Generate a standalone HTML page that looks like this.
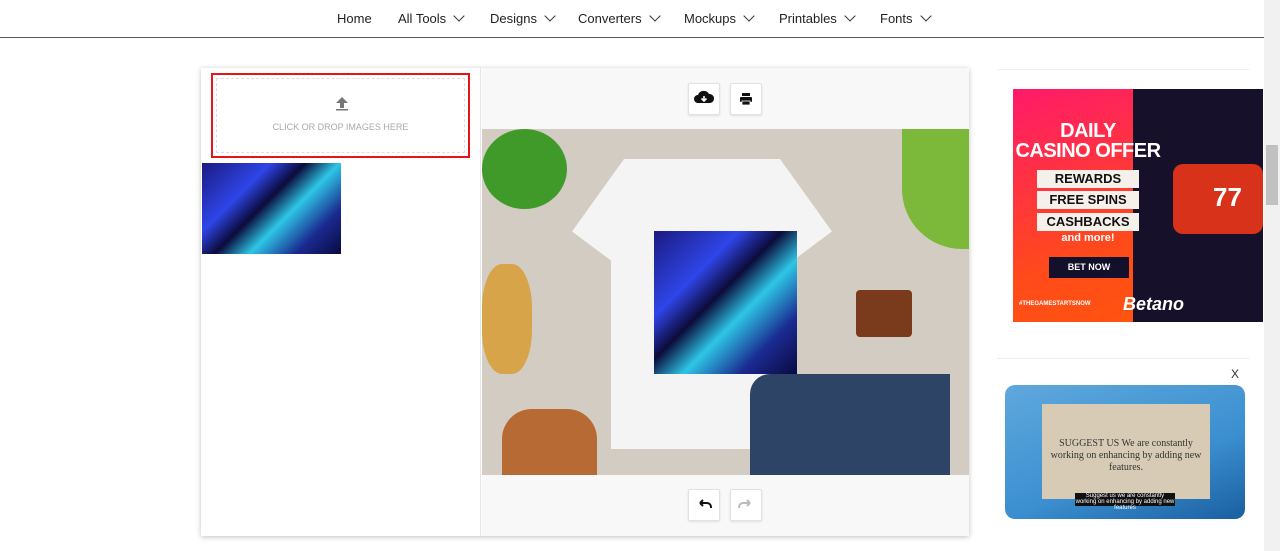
<!DOCTYPE html>
<html><head><style>
*{box-sizing:border-box;margin:0;padding:0}
body{width:1280px;height:551px;overflow:hidden;background:#fff;font-family:"Liberation Sans",sans-serif;position:relative}
.nav{position:absolute;top:0;left:0;width:1264px;height:38px;border-bottom:1px solid #555}
.nav span{position:absolute;top:11px;font-size:13px;color:#222}
.nav i{display:inline-block;width:8px;height:8px;border-right:1px solid #333;border-bottom:1px solid #333;transform:rotate(45deg);margin-left:9px;position:relative;top:-3px}
.card{position:absolute;left:201px;top:68px;width:768px;height:468px;background:#fff;box-shadow:0 1px 5px rgba(0,0,0,.25)}
.left{position:absolute;left:0;top:0;width:280px;height:468px;border-right:1px solid #e5e5e5}
.drop{position:absolute;left:10px;top:5px;width:259px;height:85px;border:2px solid #e8121b}
.drop .in{position:absolute;inset:3px;border:1px dashed #ddd}
.drop p{position:absolute;top:47px;width:100%;text-align:center;font-size:9px;color:#aaa}
.thumb{position:absolute;left:1px;top:95px;width:139px;height:91px;background:linear-gradient(135deg,#1a1a80,#2f45e8 30%,#0b0b3a 45%,#2dc6e6 60%,#1a2a90 80%,#0a0a40)}
.right{position:absolute;left:281px;top:0;width:487px;height:468px;background:#f8f8f8}
.btn{position:absolute;width:32px;height:32px;background:#fff;border:1px solid #e2e2e2;border-radius:2px;box-shadow:0 1px 2px rgba(0,0,0,.1)}
.photo{position:absolute;left:0;top:61px;width:487px;height:346px;background:#d3ccc2}
.ad{position:absolute;left:1013px;top:89px;width:250px;height:233px;background:linear-gradient(160deg,#ff1a6a,#ff4a1a 60%,#ff5a0a);overflow:hidden}
.ad .dark{position:absolute;right:0;top:0;width:130px;height:233px;background:#16102a}
.sb{position:absolute;right:0;top:0;width:16px;height:551px;background:#f1f1f1}
.tag{position:absolute;left:24px;width:102px;height:18px;background:#f5f0ea;font:bold 13px 'Liberation Sans Narrow','Liberation Sans';text-align:center;color:#111;line-height:18px}
</style></head><body>
<div class="nav">
<span style="left:337px">Home</span>
<span style="left:398px">All Tools<i></i></span>
<span style="left:490px">Designs<i></i></span>
<span style="left:578px">Converters<i></i></span>
<span style="left:684px">Mockups<i></i></span>
<span style="left:779px">Printables<i></i></span>
<span style="left:880px">Fonts<i></i></span>
</div>
<div class="card">
<div class="left">
<div class="drop"><div class="in"></div>
<svg style="position:absolute;left:122px;top:21px" width="14" height="16" viewBox="0 0 14 16"><path d="M7 1L1 7h4v5h4V7h4z" fill="#777"/><rect x="1" y="13" width="12" height="1.5" fill="#777"/></svg>
<p>CLICK OR DROP IMAGES HERE</p></div>
<div class="thumb"></div>
</div>
<div class="right">
<div class="btn" style="left:206px;top:15px"><svg width="30" height="30" viewBox="0 0 30 30"><path d="M9 19a4 4 0 0 1 0-8 6 6 0 0 1 11-1 4.5 4.5 0 0 1 1 9z" fill="#111"/><path d="M15 12v5M12.5 14.5l2.5 2.5 2.5-2.5" stroke="#fff" stroke-width="1.6" fill="none"/></svg></div>
<div class="btn" style="left:248px;top:15px"><svg width="30" height="30" viewBox="0 0 30 30"><rect x="11" y="9" width="8" height="3" fill="#111"/><rect x="9" y="13" width="12" height="5" rx="1" fill="#111"/><rect x="11" y="17" width="8" height="4" fill="#111" stroke="#fff" stroke-width=".8"/></svg></div>
<div class="photo">
<div style="position:absolute;left:0;top:0;width:85px;height:80px;border-radius:50%;background:#3f9a2a"></div>
<div style="position:absolute;left:90px;top:30px;width:260px;height:290px;background:#f4f4f4;clip-path:polygon(20% 0,80% 0,100% 25%,85% 35%,85% 100%,15% 100%,15% 35%,0 25%)"></div>
<div style="position:absolute;left:172px;top:102px;width:143px;height:143px;background:linear-gradient(135deg,#1a1a80,#2f45e8 30%,#0b0b3a 45%,#2dc6e6 60%,#1a2a90 80%,#0a0a40)"></div>
<div style="position:absolute;left:268px;top:245px;width:200px;height:101px;background:#2d4466;border-radius:20px 0 0 0"></div>
<div style="position:absolute;left:374px;top:161px;width:56px;height:47px;background:#7a3b1c;border-radius:4px"></div>
<div style="position:absolute;left:20px;top:280px;width:95px;height:66px;background:#b86a35;border-radius:30px 30px 0 0"></div>
<div style="position:absolute;left:0;top:135px;width:50px;height:110px;background:#d99a2a;border-radius:40%;opacity:.8"></div>
<div style="position:absolute;left:420px;top:0;width:67px;height:120px;background:#7cb83a;border-radius:0 0 0 60px"></div>
</div>
<div class="btn" style="left:206px;top:421px"><svg width="30" height="30" viewBox="0 0 30 30"><path d="M11 13h7a4 4 0 0 1 4 4v1M11 13l3-3M11 13l3 3" stroke="#111" stroke-width="2" fill="none"/></svg></div>
<div class="btn" style="left:248px;top:421px"><svg width="30" height="30" viewBox="0 0 30 30"><path d="M19 13h-7a4 4 0 0 0-4 4v1M19 13l-3-3M19 13l-3 3" stroke="#bbb" stroke-width="2" fill="none"/></svg></div>
</div>
</div>
<div style="position:absolute;left:997px;top:69px;width:252px;border-top:1px solid #eee"></div>
<div class="ad"><div class="dark"></div>
<div style="position:absolute;left:0;top:32px;width:150px;text-align:center;color:#fff;font:bold 20px/20px 'Liberation Sans Narrow','Liberation Sans';letter-spacing:-0.5px">DAILY<br>CASINO OFFER</div>
<div class="tag" style="top:81px">REWARDS</div>
<div class="tag" style="top:102px">FREE SPINS</div>
<div class="tag" style="top:124px">CASHBACKS</div>
<div style="position:absolute;left:0;top:143px;width:150px;text-align:center;color:#fff;font:bold 11px 'Liberation Sans'">and more!</div>
<div style="position:absolute;left:36px;top:168px;width:80px;height:21px;background:#12102a;color:#fff;font:bold 9px 'Liberation Sans';text-align:center;line-height:21px">BET NOW</div>
<div style="position:absolute;left:6px;top:212px;color:#fff;font:bold 6px 'Liberation Sans'">#THEGAMESTARTSNOW</div>
<div style="position:absolute;left:110px;top:205px;color:#fff;font:bold italic 18px 'Liberation Sans'">Betano</div>
<div style="position:absolute;left:160px;top:75px;width:90px;height:70px;background:#d8321a;border-radius:10px"></div>
<div style="position:absolute;left:200px;top:93px;color:#fff;font:bold 26px 'Liberation Sans'">77</div>
</div>
<div style="position:absolute;left:997px;top:358px;width:252px;border-top:1px solid #eee"></div>
<div style="position:absolute;left:1231px;top:367px;font-size:12px;color:#333">X</div>
<div style="position:absolute;left:1005px;top:385px;width:240px;height:134px;border-radius:10px;background:linear-gradient(160deg,#5fa8dd,#3b8fd0 60%,#1a5fa0)">
<div style="position:absolute;left:37px;top:19px;width:168px;height:95px;background:#d8cbb5;font:10px 'Liberation Serif',serif;color:#333;text-align:center;padding-top:34px;line-height:12px">SUGGEST US We are constantly working on enhancing by adding new features.</div>
<div style="position:absolute;left:70px;top:108px;width:100px;height:13px;background:#111;color:#fff;font-size:6px;line-height:6px;text-align:center">Suggest us we are constantly working on enhancing by adding new features</div>
</div>
<div class="sb"><div style="position:absolute;left:2px;top:145px;width:12px;height:60px;background:#c1c1c1"></div></div>
</body></html>
